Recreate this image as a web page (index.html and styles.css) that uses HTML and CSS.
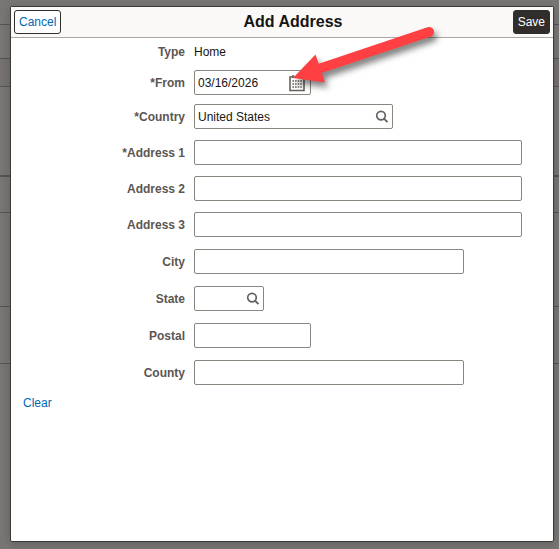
FILE: index.html
```html
<!DOCTYPE html>
<html lang="en">
<head>
    <meta charset="UTF-8">
    <meta name="viewport" content="width=device-width, initial-scale=1.0">
    <title>Add Address</title>
    <link rel="stylesheet" href="styles.css">
</head>
<body>
    <!-- Dimmed page behind the dialog -->
    <div class="backdrop" aria-hidden="true">
        <div class="band band-top"></div>
        <div class="band band-head"></div>
        <div class="band band-sub"></div>
        <div class="band band-section"></div>
        <div class="band band-row"></div>
        <div class="band band-large"></div>
        <div class="band band-last"></div>
    </div>

    <form class="dialog" role="dialog" aria-labelledby="dialog-title">
        <header class="dialog-header">
            <button type="button" class="btn">Cancel</button>
            <h1 id="dialog-title">Add Address</h1>
            <button type="button" class="btn btn-primary">Save</button>
        </header>

        <div class="fields fields-top">
            <div class="field field-static">
                <span class="label">Type</span>
                <span>Home</span>
            </div>
            <div class="field">
                <label for="from">*From</label>
                <div class="control control-short">
                    <input type="text" id="from" value="03/16/2026">
                    <button type="button" class="icon-btn icon-btn-date" aria-label="Choose a date">
                        <svg width="16" height="18" viewBox="0 0 16 18">
                            <path d="M1 3h14v13.500H1z" fill="#fff" stroke="#66615d" stroke-width="1.6"/>
                            <path d="M4 1v3M12 1v3" stroke="#66615d" stroke-width="1.600"/>
                            <path d="M3.400 7h9.800M3.400 10h9.800M3.400 13h9.800" stroke="#66615d" stroke-width="1.600" stroke-dasharray="1.600 1"/>
                        </svg>
                    </button>
                </div>
            </div>
            <div class="field">
                <label for="country">*Country</label>
                <div class="control control-medium">
                    <input type="text" id="country" value="United States">
                    <button type="button" class="icon-btn" aria-label="Look up country">
                        <svg width="14" height="14" viewBox="0 0 14 14">
                            <circle cx="6" cy="5.600" r="4.300" fill="none" stroke="#66615d" stroke-width="1.7"/>
                            <path d="M9 8.600l3.500 3.500" stroke="#66615d" stroke-width="2"/>
                        </svg>
                    </button>
                </div>
            </div>
        </div>

        <div class="fields fields-lines">
            <div class="field">
                <label for="address1">*Address 1</label>
                <div class="control control-full"><input type="text" id="address1"></div>
            </div>
            <div class="field">
                <label for="address2">Address 2</label>
                <div class="control control-full"><input type="text" id="address2"></div>
            </div>
            <div class="field">
                <label for="address3">Address 3</label>
                <div class="control control-full"><input type="text" id="address3"></div>
            </div>
        </div>

        <div class="fields fields-place">
            <div class="field">
                <label for="city">City</label>
                <div class="control control-long"><input type="text" id="city"></div>
            </div>
            <div class="field">
                <label for="state">State</label>
                <div class="control control-code">
                    <input type="text" id="state">
                    <button type="button" class="icon-btn" aria-label="Look up state">
                        <svg width="14" height="14" viewBox="0 0 14 14">
                            <circle cx="6" cy="5.600" r="4.300" fill="none" stroke="#66615d" stroke-width="1.7"/>
                            <path d="M9 8.600l3.500 3.500" stroke="#66615d" stroke-width="2"/>
                        </svg>
                    </button>
                </div>
            </div>
            <div class="field">
                <label for="postal">Postal</label>
                <div class="control control-short"><input type="text" id="postal"></div>
            </div>
            <div class="field">
                <label for="county">County</label>
                <div class="control control-long"><input type="text" id="county"></div>
            </div>
        </div>

        <a href="#" class="clear-link">Clear</a>

        <!-- Callout arrow pointing at the calendar button -->
        <svg class="callout" width="160" height="80" viewBox="285 15 160 80" aria-hidden="true">
            <path d="M293 78L315.500 54.500 318.700 63.700 427.500 27.200Q432 26 434 30.500 434.500 35 431 36.500L321.800 73 325 82.500Z" fill="#fe4042"/>
        </svg>
    </form>
</body>
</html>
```

FILE: styles.css
```css
* {
    box-sizing: border-box;
}
body {
    margin: 0;
    min-height: 100vh;
    display: grid;
    font-family: "Liberation Sans", Arial, sans-serif;
    font-size: 12px;
    line-height: 16px;
    color: #161513;
    background-color: #777675;
}
.backdrop,
.dialog {
    grid-area: 1 / 1;
}
.band {
    border-bottom: 1px solid #555453;
}
.band-top {
    height: 25px;
}
.band-head {
    height: 34px;
}
.band-sub {
    height: 28px;
    background-color: #747170;
}
.band-section {
    height: 90px;
    border-bottom-width: 2px;
}
.band-row {
    height: 36px;
}
.band-large {
    height: 94px;
}
.band-last {
    height: 57px;
}
.dialog {
    position: relative;
    margin: 6px 5px 7px 10px;
    background-color: #fff;
    border: 1px solid #3b3835;
    border-radius: 2px;
    box-shadow: 0 2px 8px rgba(0, 0, 0, 0.2);
}
.dialog-header {
    display: flex;
    align-items: center;
    padding: 3px;
    background-color: #fbf9f8;
    border-bottom: 1px solid #aaa8a6;
}
.dialog-header h1 {
    flex: 1;
    margin: 0;
    padding-left: 12px;
    font-size: 16px;
    line-height: 24px;
    text-align: center;
}
.btn {
    height: 24px;
    padding: 0 4px;
    font: inherit;
    color: #0068b3;
    background-color: #fff;
    border: 1px solid #312d2a;
    border-radius: 3px;
    cursor: pointer;
}
.btn-primary {
    color: #fff;
    background-color: #312d2a;
}
.fields {
    display: flex;
    flex-direction: column;
}
.fields-top {
    gap: 9px;
    padding-top: 6px;
}
.fields-lines {
    gap: 11px;
    padding-top: 11px;
}
.fields-place {
    gap: 12px;
    padding-top: 12px;
}
.field {
    display: grid;
    grid-template-columns: 174px 1fr;
    column-gap: 9px;
    align-items: center;
    padding-right: 31px;
}
.field-static {
    padding-bottom: 1px;
}
label,
.label {
    font-weight: bold;
    text-align: right;
    color: #5b5652;
}
.control {
    display: flex;
    align-items: center;
    height: 25px;
    background-color: #fff;
    border: 1px solid #8b8580;
    border-radius: 2px;
}
.control input {
    flex: 1;
    min-width: 0;
    height: 100%;
    padding: 0 3px;
    font: inherit;
    color: inherit;
    background: none;
    border: 0;
}
.control-short {
    max-width: 117px;
}
.control-medium {
    max-width: 199px;
}
.control-long {
    max-width: 270px;
}
.control-code {
    max-width: 70px;
}
.icon-btn {
    display: flex;
    padding: 0 3px 0 0;
    background: none;
    border: 0;
    cursor: pointer;
}
.icon-btn-date {
    padding-right: 5px;
}
.clear-link {
    display: inline-block;
    margin: 10px 12px;
    color: #0068b3;
    text-decoration: none;
}
.callout {
    position: absolute;
    top: 8px;
    left: 274px;
    overflow: visible;
    pointer-events: none;
    filter: drop-shadow(3px 5px 3px rgba(0, 0, 0, 0.5));
}
```
